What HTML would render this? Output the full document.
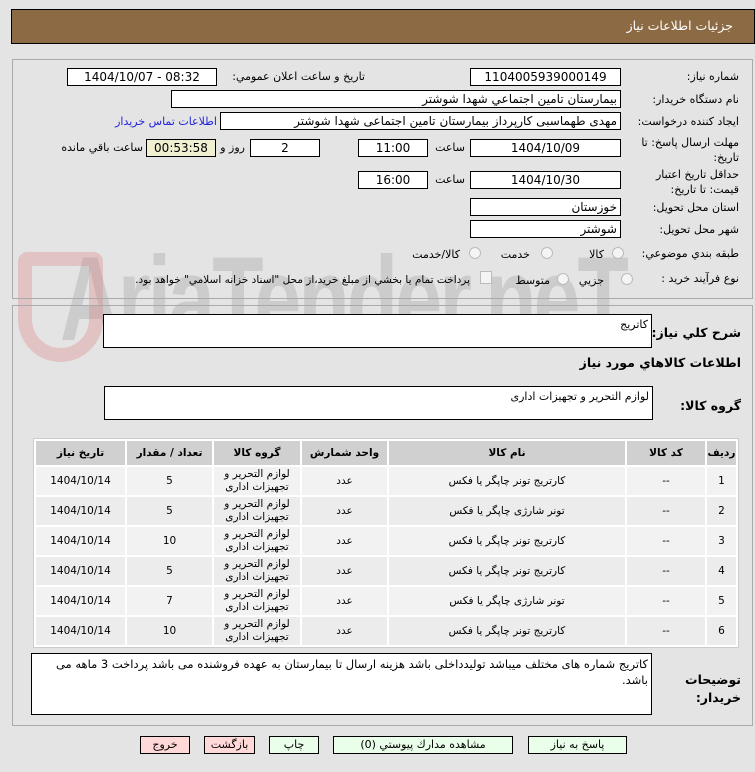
<!DOCTYPE html>
<html><head><meta charset="utf-8"><style>
*{box-sizing:border-box;margin:0;padding:0}
body{width:755px;height:772px;background:#e4e4e4;font-family:"DejaVu Sans","Noto Sans CJK SC",sans-serif;font-size:11px;color:#000;position:relative;overflow:hidden}
.a{position:absolute}
.box{position:absolute;background:#fff;border:1px solid #000;height:18px;line-height:16px;padding:0 3px;white-space:nowrap;overflow:hidden;font-size:12px}
.c{text-align:center}.r{text-align:right;direction:rtl}
.l{position:absolute;direction:rtl;text-align:right;white-space:nowrap}
.b{font-weight:bold}
.n{letter-spacing:-0.4px}
table{border-collapse:separate;border-spacing:2px;position:absolute;left:33px;top:438px;width:706px;background:#fff;border:1px solid #ccc;direction:rtl}
th{background:#d0d0d0;height:24px;font-weight:bold;font-size:10.5px}
td{background:#f2f2f2;height:28px;text-align:center;font-size:10.5px;line-height:13px}
tr:nth-child(odd) td{background:#ececec}
.btn{position:absolute;height:18px;border:1px solid #000;text-align:center;line-height:16px;direction:rtl}
.g{background:#eaffea}.p{background:#ffd8d8}
.rad{position:absolute;width:12px;height:12px;border-radius:50%;border:1px solid #bbb;background:#f4f4f4}
</style></head><body>
<div class="a" style="left:60px;top:230px;font-size:120px;color:rgba(160,160,160,.35);font-family:'Liberation Sans',sans-serif;font-weight:bold;letter-spacing:-4px;transform:scaleX(.7);transform-origin:left top">AriaTender.neT</div>
<div class="a" style="left:18px;top:252px;width:85px;height:110px;border:14px solid rgba(220,120,120,.3);border-radius:10px 10px 45px 45px"></div>
<div class="a" style="left:11px;top:9px;width:744px;height:35px;background:#8c6b44;border:1px solid #000"></div>
<div class="l" style="right:22px;top:18px;color:#fff;font-size:12.5px">جزئيات اطلاعات نياز</div>
<div class="a" style="left:12px;top:59px;width:741px;height:240px;border:1px solid #aaa"></div>
<div class="a" style="left:12px;top:305px;width:741px;height:421px;border:1px solid #aaa"></div>

<div class="l" style="right:16px;top:70px">شماره نياز:</div>
<div class="box c" style="left:470px;top:68px;width:151px">1104005939000149</div>
<div class="box c" style="left:67px;top:68px;width:150px">1404/10/07 - 08:32</div>
<div class="l n" style="right:390px;top:70px">تاريخ و ساعت اعلان عمومي:</div>

<div class="l" style="right:16px;top:93px">نام دستگاه خريدار:</div>
<div class="box r n" style="left:171px;top:90px;width:450px">بيمارستان تامين اجتماعي شهدا شوشتر</div>

<div class="l n" style="right:16px;top:115px">ايجاد کننده درخواست:</div>
<div class="box r n" style="left:220px;top:112px;width:401px">مهدی طهماسبی کارپرداز بیمارستان تامین اجتماعی شهدا شوشتر</div>
<div class="l n" style="right:538px;top:115px;color:#2222dd">اطلاعات تماس خريدار</div>

<div class="l n" style="right:16px;top:135px;line-height:15px;text-align:right">مهلت ارسال پاسخ: تا<br>تاريخ:</div>
<div class="box c" style="left:470px;top:139px;width:151px">1404/10/09</div>
<div class="l" style="right:290px;top:141px">ساعت</div>
<div class="box c" style="left:358px;top:139px;width:70px">11:00</div>
<div class="box c" style="left:250px;top:139px;width:70px">2</div>
<div class="l" style="right:510px;top:141px">روز و</div>
<div class="box c" style="left:146px;top:139px;width:70px;background:#f0f0d0">00:53:58</div>
<div class="l n" style="right:612px;top:141px">ساعت باقي مانده</div>

<div class="l n" style="right:16px;top:167px;line-height:15px">حداقل تاريخ اعتبار<br>قيمت: تا تاريخ:</div>
<div class="box c" style="left:470px;top:171px;width:151px">1404/10/30</div>
<div class="l" style="right:290px;top:173px">ساعت</div>
<div class="box c" style="left:358px;top:171px;width:70px">16:00</div>

<div class="l" style="right:16px;top:201px">استان محل تحويل:</div>
<div class="box r" style="left:470px;top:198px;width:151px">خوزستان</div>
<div class="l" style="right:16px;top:223px">شهر محل تحويل:</div>
<div class="box r" style="left:470px;top:220px;width:151px">شوشتر</div>

<div class="l n" style="right:16px;top:247px">طبقه بندي موضوعي:</div>
<div class="rad" style="left:612px;top:247px"></div><div class="l" style="right:151px;top:248px">كالا</div>
<div class="rad" style="left:541px;top:247px"></div><div class="l" style="right:225px;top:248px">خدمت</div>
<div class="rad" style="left:469px;top:247px"></div><div class="l" style="right:295px;top:248px">كالا/خدمت</div>

<div class="l n" style="right:16px;top:272px">نوع فرآيند خريد :</div>
<div class="rad" style="left:621px;top:273px"></div><div class="l" style="right:151px;top:274px">جزيي</div>
<div class="rad" style="left:557px;top:273px"></div><div class="l" style="right:205px;top:274px">متوسط</div>
<div class="a" style="left:480px;top:271px;width:12px;height:13px;border:1px solid #bbb;background:#f4f4f4"></div>
<div class="l" style="right:285px;top:274px;font-size:10.5px;letter-spacing:-0.3px">پرداخت تمام يا بخشي از مبلغ خريد،از محل "اسناد خزانه اسلامي" خواهد بود.</div>

<div class="l b" style="right:14px;top:325px;font-size:12.5px">شرح كلي نياز:</div>
<div class="box r" style="left:103px;top:314px;width:549px;height:34px;line-height:20px;font-size:11px">کاتریج</div>
<div class="l b" style="right:14px;top:355px;font-size:12.5px">اطلاعات كالاهاي مورد نياز</div>
<div class="l b" style="right:14px;top:398px;font-size:12.5px">گروه كالا:</div>
<div class="box r" style="left:104px;top:386px;width:549px;height:34px;line-height:20px;font-size:11px">لوازم التحرير و تجهيزات اداری</div>

<table>
<tr><th style="width:29px">رديف</th><th style="width:78px">كد كالا</th><th>نام كالا</th><th style="width:85px">واحد شمارش</th><th style="width:86px">گروه كالا</th><th style="width:85px">تعداد / مقدار</th><th style="width:89px">تاريخ نياز</th></tr>
<tr><td>1</td><td>--</td><td>کارتریج تونر چاپگر یا فکس</td><td>عدد</td><td>لوازم التحرير و<br>تجهيزات اداری</td><td>5</td><td>1404/10/14</td></tr>
<tr><td>2</td><td>--</td><td>تونر شارژی چاپگر یا فکس</td><td>عدد</td><td>لوازم التحرير و<br>تجهيزات اداری</td><td>5</td><td>1404/10/14</td></tr>
<tr><td>3</td><td>--</td><td>کارتریج تونر چاپگر یا فکس</td><td>عدد</td><td>لوازم التحرير و<br>تجهيزات اداری</td><td>10</td><td>1404/10/14</td></tr>
<tr><td>4</td><td>--</td><td>کارتریج تونر چاپگر یا فکس</td><td>عدد</td><td>لوازم التحرير و<br>تجهيزات اداری</td><td>5</td><td>1404/10/14</td></tr>
<tr><td>5</td><td>--</td><td>تونر شارژی چاپگر یا فکس</td><td>عدد</td><td>لوازم التحرير و<br>تجهيزات اداری</td><td>7</td><td>1404/10/14</td></tr>
<tr><td>6</td><td>--</td><td>کارتریج تونر چاپگر یا فکس</td><td>عدد</td><td>لوازم التحرير و<br>تجهيزات اداری</td><td>10</td><td>1404/10/14</td></tr>
</table>

<div class="l b" style="right:14px;top:671px;font-size:12.5px;line-height:18px">توضيحات<br>خريدار:</div>
<div class="box r" style="left:31px;top:653px;width:621px;height:62px;white-space:normal;line-height:16px;padding-top:2px;font-size:11.5px">کاتریج شماره های مختلف میباشد تولیدداخلی باشد هزینه ارسال تا بیمارستان به عهده فروشنده می باشد پرداخت 3 ماهه می باشد.</div>

<div class="btn g" style="left:528px;top:736px;width:99px">پاسخ به نياز</div>
<div class="btn g" style="left:333px;top:736px;width:180px">مشاهده مدارك پيوستي (0)</div>
<div class="btn g" style="left:269px;top:736px;width:50px">چاپ</div>
<div class="btn p" style="left:204px;top:736px;width:51px">بازگشت</div>
<div class="btn p" style="left:140px;top:736px;width:50px">خروج</div>
</body></html>
